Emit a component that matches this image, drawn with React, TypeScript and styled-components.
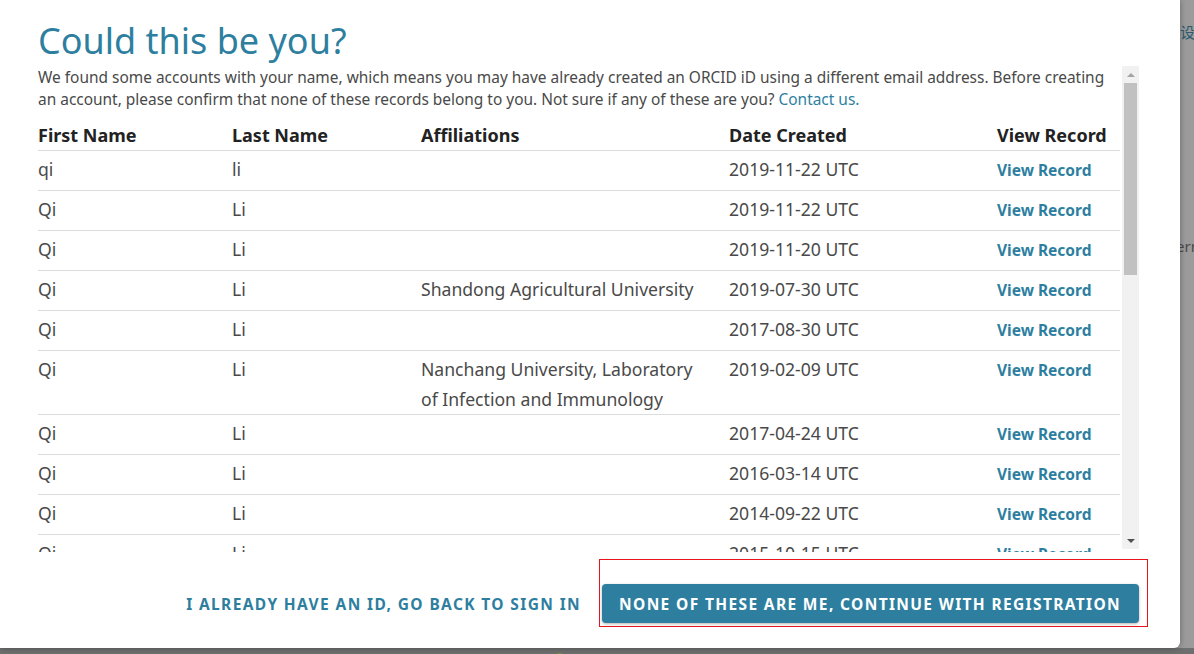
import React from "react";
import styled, { createGlobalStyle } from "styled-components";

const Global = createGlobalStyle`
  html, body { margin: 0; padding: 0; }
  body { font-family: "Noto Sans", "Open Sans", "Noto Sans CJK SC", sans-serif; background: #9b9b9b; }
  * { box-sizing: border-box; }
`;

const Page = styled.div`
  position: relative;
  width: 100vw;
  height: 100vh;
  overflow: hidden;
  background: #9b9b9b;
  display: flex;
  flex-direction: column;
`;

const BgHeader = styled.div`
  padding: 21px 0 0 1180px;
  height: 236px;
  font-size: 15px;
  color: #2b5b70;
  white-space: nowrap;
`;

const BgText = styled.div`
  padding-left: 1167px;
  font-size: 15px;
  color: #4a4a4a;
  white-space: nowrap;
  flex: 1;
`;

const BgFooter = styled.div`
  height: 6px;
  background: #6f6f6f;
  overflow: hidden;
  padding-left: 470px;
  font-size: 40px;
  line-height: 1;
  font-weight: 700;
  white-space: nowrap;
`;

const Logo = styled.div`
  display: inline-block;
  margin-top: -13px;
`;

const LogoGrey = styled.span`
  color: #555;
`;

const LogoGreen = styled.span`
  color: #7b9b2b;
`;

const Modal = styled.div`
  position: absolute;
  left: 0;
  top: 0;
  width: 1180px;
  height: 648px;
  background: #fff;
  border-bottom-right-radius: 6px;
  box-shadow: 0 0 6px rgba(0, 0, 0, 0.35);
  display: flex;
  flex-direction: column;
  padding: 21px 41px 0 38px;
`;

const Title = styled.h2`
  margin: 0 0 5px;
  font-size: 36px;
  line-height: 40px;
  font-weight: 400;
  color: #2e7f9f;
`;

const ScrollArea = styled.div`
  display: flex;
  align-items: flex-start;
  height: 486px;
`;

const Viewport = styled.div`
  flex: 1;
  height: 100%;
  overflow: hidden;
`;

const Intro = styled.p`
  margin: 0 0 6px;
  font-size: 15.45px;
  line-height: 22px;
  color: #494949;
`;

const Link = styled.a`
  color: #2e7f9f;
  text-decoration: none;
`;

const Table = styled.table`
  width: 1082px;
  border-collapse: collapse;
  table-layout: fixed;
`;

const Th = styled.th<{ $w: number }>`
  width: ${(p) => p.$w}px;
  text-align: left;
  font-size: 18px;
  font-weight: 700;
  line-height: 30px;
  color: #222;
  padding: 4px 0 0;
  border-bottom: 1px solid #dcdcdc;
  white-space: nowrap;
`;

const Td = styled.td`
  vertical-align: top;
  font-size: 17.6px;
  line-height: 30px;
  color: #494949;
  padding: 3px 20px 0 0;
  height: 40px;
  border-bottom: 1px solid #dcdcdc;
`;

const RecordLink = styled.a`
  font-size: 15.5px;
  font-weight: 700;
  color: #2e7f9f;
  text-decoration: none;
`;

const Scrollbar = styled.div`
  width: 17px;
  height: 483px;
  background: #f1f1f1;
  display: flex;
  flex-direction: column;
`;

const Arrow = styled.div<{ $dir: "up" | "down" }>`
  height: 17px;
  display: flex;
  align-items: center;
  justify-content: center;
  &::before {
    content: "";
    width: 0;
    height: 0;
    border-left: 4px solid transparent;
    border-right: 4px solid transparent;
    ${(p) =>
      p.$dir === "up"
        ? "border-bottom: 4px solid #a3a3a3;"
        : "border-top: 4px solid #505050;"}
  }
`;

const Track = styled.div`
  flex: 1;
  padding: 0 2px;
`;

const Thumb = styled.div`
  height: 192px;
  background: #c1c1c1;
`;

const Footer = styled.div`
  flex: 1;
  display: flex;
  justify-content: flex-end;
  align-items: flex-end;
  padding: 0 0 21px;
  margin-right: -9px;
  gap: 18px;
`;

const SecondaryButton = styled.button`
  border: none;
  background: none;
  padding: 0;
  height: 39px;
  margin-bottom: 4px;
  font-family: inherit;
  font-size: 15.5px;
  font-weight: 700;
  letter-spacing: 1.38px;
  text-transform: uppercase;
  color: #2e7f9f;
  cursor: pointer;
  white-space: nowrap;
`;

const Highlight = styled.div`
  border: 1px solid #e8141c;
  padding: 24px 8px 3px 2px;
`;

const PrimaryButton = styled.button`
  border: none;
  height: 39px;
  padding: 0 18px 0 17px;
  border-radius: 4px;
  background: #2e7f9f;
  box-shadow: 0 1px 3px rgba(0, 0, 0, 0.3);
  font-family: inherit;
  font-size: 15.5px;
  font-weight: 700;
  letter-spacing: 1.36px;
  text-transform: uppercase;
  color: #fff;
  cursor: pointer;
  white-space: nowrap;
`;

type Row = { first: string; last: string; aff: string; date: string };

const rows: Row[] = [
  { first: "qi", last: "li", aff: "", date: "2019-11-22 UTC" },
  { first: "Qi", last: "Li", aff: "", date: "2019-11-22 UTC" },
  { first: "Qi", last: "Li", aff: "", date: "2019-11-20 UTC" },
  { first: "Qi", last: "Li", aff: "Shandong Agricultural University", date: "2019-07-30 UTC" },
  { first: "Qi", last: "Li", aff: "", date: "2017-08-30 UTC" },
  { first: "Qi", last: "Li", aff: "Nanchang University, Laboratory of Infection and Immunology", date: "2019-02-09 UTC" },
  { first: "Qi", last: "Li", aff: "", date: "2017-04-24 UTC" },
  { first: "Qi", last: "Li", aff: "", date: "2016-03-14 UTC" },
  { first: "Qi", last: "Li", aff: "", date: "2014-09-22 UTC" },
  { first: "Qi", last: "Li", aff: "", date: "2015-10-15 UTC" },
  { first: "Qi", last: "Li", aff: "", date: "2018-05-11 UTC" },
];

const columns = [
  { label: "First Name", w: 194 },
  { label: "Last Name", w: 189 },
  { label: "Affiliations", w: 308 },
  { label: "Date Created", w: 268 },
  { label: "View Record", w: 123 },
];

export default function App() {
  return (
    <Page>
      <Global />
      <BgHeader>设置</BgHeader>
      <BgText>Permission</BgText>
      <BgFooter>
        <Logo>
          <LogoGrey>ORC</LogoGrey>
          <LogoGreen>iD</LogoGreen>
        </Logo>
      </BgFooter>
      <Modal>
        <Title>Could this be you?</Title>
        <ScrollArea>
          <Viewport>
            <Intro>
              We found some accounts with your name, which means you may have already created an ORCID iD using a
              different email address. Before creating an account, please confirm that none of these records belong
              to you. Not sure if any of these are you? <Link href="#">Contact us.</Link>
            </Intro>
            <Table>
              <thead>
                <tr>
                  {columns.map((c) => (
                    <Th key={c.label} $w={c.w}>
                      {c.label}
                    </Th>
                  ))}
                </tr>
              </thead>
              <tbody>
                {rows.map((r, i) => (
                  <tr key={i}>
                    <Td>{r.first}</Td>
                    <Td>{r.last}</Td>
                    <Td>{r.aff}</Td>
                    <Td>{r.date}</Td>
                    <Td>
                      <RecordLink href="#">View Record</RecordLink>
                    </Td>
                  </tr>
                ))}
              </tbody>
            </Table>
          </Viewport>
          <Scrollbar>
            <Arrow $dir="up" />
            <Track>
              <Thumb />
            </Track>
            <Arrow $dir="down" />
          </Scrollbar>
        </ScrollArea>
        <Footer>
          <SecondaryButton>I already have an ID, go back to sign in</SecondaryButton>
          <Highlight>
            <PrimaryButton>None of these are me, continue with registration</PrimaryButton>
          </Highlight>
        </Footer>
      </Modal>
    </Page>
  );
}
